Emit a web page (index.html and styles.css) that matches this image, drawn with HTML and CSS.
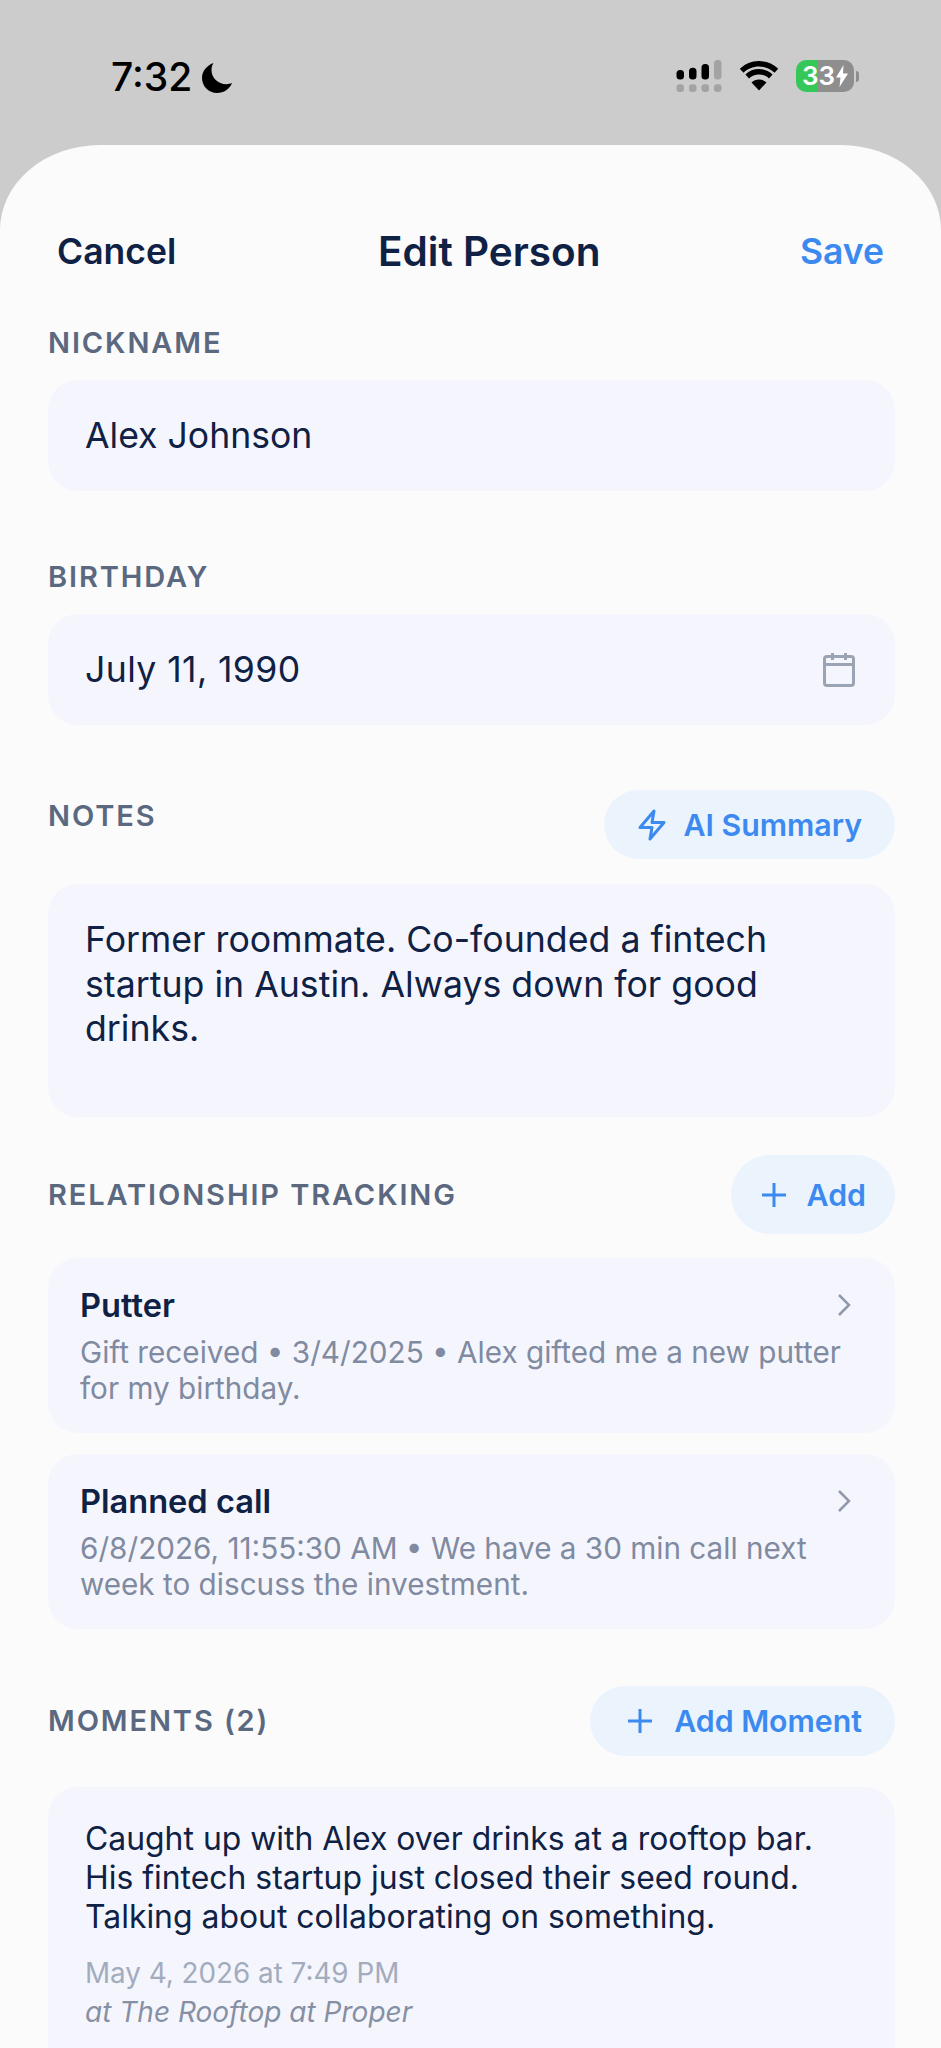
FILE: index.html
```html
<!DOCTYPE html>
<html lang="en">
<head>
<meta charset="utf-8">
<title>Edit Person</title>
<link rel="stylesheet" href="styles.css">
</head>
<body>
<div class="page">
  <header class="status">
    <div class="status-left">
      <span class="time">7:32</span>
      <svg class="moon" viewBox="0 0 32 32"><path d="M12.500 1C5.500 3.500 1 9.600 1 16c0 8.300 6.700 15 15 15 6.800 0 12.800-4 15-10-1.600 .7-3.600 1.200-5.500 1.200C17 22.200 10.500 16 10.500 8c0-2.500 .7-5 2-7z"/></svg>
    </div>
    <div class="status-right">
      <svg class="signal" viewBox="0 0 46 32">
        <rect x="0.500" y="10" width="7.500" height="9.500" rx="3.500"/><rect x="13" y="7.700" width="7.500" height="11.800" rx="3.500"/><rect x="25.500" y="4" width="7.500" height="15.500" rx="3.500"/>
        <g class="dim"><rect x="38" y="0" width="7.500" height="19.500" rx="3.500"/><rect x="0.500" y="24.300" width="7.500" height="7.700" rx="3"/><rect x="13" y="24.300" width="7.500" height="7.700" rx="3"/><rect x="25.500" y="24.300" width="7.500" height="7.700" rx="3"/><rect x="38" y="24.300" width="7.500" height="7.700" rx="3"/></g>
      </svg>
      <svg class="wifi" viewBox="0 0 40 30">
        <path d="M20 5.500c6 0 11.400 2.300 15.500 6.200l3.700-4A27.500 27.500 0 0 0 20 0 27.500 27.500 0 0 0 .8 7.700l3.700 4C8.600 7.800 14 5.500 20 5.500z"/>
        <path d="M20 13.500c3.800 0 7.300 1.400 10 3.900l3.600-4A20 20 0 0 0 20 8a20 20 0 0 0-13.600 5.400l3.600 4c2.700-2.500 6.200-3.900 10-3.900z"/>
        <path d="M20 29.500l7.500-8.100C25.500 19.600 22.900 18.500 20 18.500s-5.500 1.100-7.500 2.900z"/>
      </svg>
      <div class="battery">
        <span class="batt-body"><span class="batt-num">33</span><svg class="batt-bolt" viewBox="0 0 12 22"><path d="M7.500 0 0 12.500h4.500L3.500 22 12 8.500H7z"/></svg></span>
        <span class="batt-cap"></span>
      </div>
    </div>
  </header>

  <main class="sheet">
    <nav class="nav">
      <span class="nav-cancel">Cancel</span>
      <span class="nav-title">Edit Person</span>
      <span class="nav-save">Save</span>
    </nav>

    <section class="field field-nick">
      <div class="label">NICKNAME</div>
      <div class="input">Alex Johnson</div>
    </section>

    <section class="field field-birth">
      <div class="label">BIRTHDAY</div>
      <div class="input input-date">
        <span class="date-value">July 11, 1990</span>
        <svg class="cal" viewBox="0 0 32 34"><rect x="1.500" y="3.500" width="29" height="29" rx="2.500"/><path d="M1.500 11.500h29M9.500 0v7M22.500 0v7"/></svg>
      </div>
    </section>

    <section class="field field-notes">
      <div class="row">
        <div class="label label-notes">NOTES</div>
        <div class="pill pill-ai">
          <svg class="bolt" viewBox="0 0 30 32"><path d="M17 2 3 18.500h12L13 30l14-16.500H15z"/></svg>
          <span>AI Summary</span>
        </div>
      </div>
      <div class="textarea">Former roommate. Co-founded a fintech<br>startup in Austin. Always down for good<br>drinks.</div>
    </section>

    <section class="field field-track">
      <div class="row">
        <div class="label">RELATIONSHIP TRACKING</div>
        <div class="pill pill-add">
          <svg class="plus" viewBox="0 0 26 26"><path d="M13 1v24M1 13h24"/></svg>
          <span>Add</span>
        </div>
      </div>
      <article class="card">
        <div class="card-head"><span class="card-title">Putter</span><svg class="chev" viewBox="0 0 14 24"><path d="M2 2l10 10L2 22"/></svg></div>
        <p class="card-sub">Gift received • 3/4/2025 • Alex gifted me a new putter<br>for my birthday.</p>
      </article>
      <article class="card">
        <div class="card-head"><span class="card-title">Planned call</span><svg class="chev" viewBox="0 0 14 24"><path d="M2 2l10 10L2 22"/></svg></div>
        <p class="card-sub">6/8/2026, 11:55:30 AM • We have a 30 min call next<br>week to discuss the investment.</p>
      </article>
    </section>

    <section class="field field-moments">
      <div class="row">
        <div class="label">MOMENTS (2)</div>
        <div class="pill pill-moment">
          <svg class="plus" viewBox="0 0 26 26"><path d="M13 1v24M1 13h24"/></svg>
          <span>Add Moment</span>
        </div>
      </div>
      <article class="moment">
        <p class="moment-text">Caught up with Alex over drinks at a rooftop bar.<br>His fintech startup just closed their seed round.<br>Talking about collaborating on something.</p>
        <p class="moment-date">May 4, 2026 at 7:49 PM</p>
        <p class="moment-place">at The Rooftop at Proper</p>
      </article>
    </section>
  </main>
</div>
</body>
</html>
```

FILE: styles.css
```css
* { box-sizing: border-box; }
html, body { margin: 0; padding: 0; }
body { font-family: Inter, "Liberation Sans", sans-serif; background: #cccccc; }
p { margin: 0; }
.page { width: 941px; height: 2048px; overflow: hidden; background: #cccccc; display: flex; flex-direction: column; }

.status { height: 145px; flex: none; display: flex; justify-content: space-between; align-items: flex-start; padding: 53px 82px 0 111px; }
.status-left { display: flex; align-items: center; gap: 9px; }
.time { font-size: 39px; line-height: 48px; font-weight: 500; color: #000; }
.moon { width: 32px; height: 32px; fill: #000; margin-top: 1px; }
.status-right { display: flex; align-items: center; gap: 17px; margin-top: 7px; }
.signal { width: 46px; height: 32px; fill: #000; }
.signal .dim { fill: #a3a3a3; }
.wifi { width: 40px; height: 30px; fill: #000; }
.battery { display: flex; align-items: center; gap: 2px; }
.batt-body { width: 58px; height: 32px; border-radius: 10px; background: linear-gradient(90deg, #36c759 0 36%, #8e8e8e 36%); display: flex; align-items: center; justify-content: center; gap: 1px; color: #fff; }
.batt-num { font-size: 26px; line-height: 32px; font-weight: 600; }
.batt-bolt { width: 12px; height: 22px; fill: #fff; }
.batt-cap { width: 3px; height: 11px; border-radius: 0 3px 3px 0; background: #8e8e8e; }

.sheet { flex: 1; background: #fbfbfc; border-radius: 100px 100px 0 0 / 85px 85px 0 0; padding: 0 46px 0 48px; }

.nav { display: grid; grid-template-columns: 321px auto 1fr; align-items: center; height: 46px; margin-top: 82px; padding: 0 11px 0 9px; font-size: 35.500px; }
.nav-cancel { font-weight: 600; color: #0f2144; }
.nav-title { font-size: 40.500px; font-weight: 600; color: #0f2144; }
.nav-save { font-weight: 600; color: #3c8af0; text-align: right; }

.field-nick { margin-top: 52px; }
.field-birth { margin-top: 68px; }
.field-notes { margin-top: 65px; }
.field-track { margin-top: 38px; }
.field-moments { margin-top: 57px; }

.label { font-size: 29px; line-height: 36px; font-weight: 600; letter-spacing: 1.900px; color: #5a6880; margin-bottom: 19px; }
.row { display: flex; justify-content: space-between; align-items: center; }
.row .label { margin-bottom: 0; }
.row .label-notes { margin-bottom: 18px; }

.input { height: 111px; border-radius: 30px; background: #f5f6fd; padding: 0 37px; font-size: 35.600px; color: #0f2144; display: flex; align-items: center; justify-content: space-between; }
.date-value { letter-spacing: 0.400px; }
.cal { width: 32px; height: 34px; fill: none; stroke: #9ba4b5; stroke-width: 3; margin-right: 3px; }

.pill { display: flex; align-items: center; border-radius: 40px; background: #ebf3fd; color: #3c8af0; font-weight: 600; font-size: 30.300px; }
.pill-ai { height: 69px; padding: 0 33px; gap: 16px; }
.pill-add { height: 79px; padding: 0 29px 0 30px; gap: 20px; }
.pill-moment { height: 70px; padding: 0 33px 0 37px; gap: 21px; }
.bolt { width: 30px; height: 32px; fill: none; stroke: #3c8af0; stroke-width: 3; stroke-linejoin: round; }
.plus { width: 26px; height: 26px; fill: none; stroke: #3c8af0; stroke-width: 3; }

.textarea { margin-top: 25px; height: 233px; border-radius: 30px; background: #f5f6fd; padding: 33px 37px; font-size: 35.700px; line-height: 44.500px; color: #0f2144; }

.card { margin-top: 21px; border-radius: 30px; background: #f5f6fd; padding: 27px 32px 26px; height: 175px; }
.field-track .row + .card { margin-top: 24px; }
.card-head { display: flex; justify-content: space-between; align-items: center; padding-right: 12px; }
.card-title { font-size: 32.600px; line-height: 40px; font-weight: 600; color: #0f2144; }
.chev { width: 14px; height: 24px; fill: none; stroke: #8f99ab; stroke-width: 2.500; }
.card-sub { margin-top: 9px; font-size: 29.700px; line-height: 36px; color: #808aa0; }

.moment { margin-top: 31px; border-radius: 30px; background: #f5f6fd; padding: 32px 37px; height: 340px; }
.moment-text { font-size: 31.900px; line-height: 39px; color: #0f2144; }
.moment-date { margin-top: 18px; font-size: 27.800px; line-height: 39px; color: #a3acbd; }
.moment-place { font-size: 28px; line-height: 39px; font-style: italic; color: #8690a5; }
```
